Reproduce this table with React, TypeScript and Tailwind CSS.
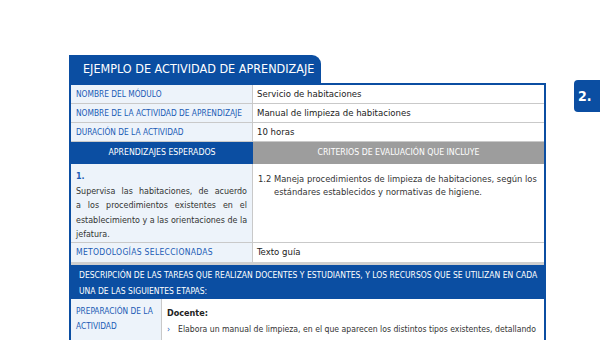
import React from "react";

const blue = "bg-[#0b4ea2]";

type Row = { label: string; value: string };

const rows: Row[] = [
  { label: "NOMBRE DEL MÓDULO", value: "Servicio de habitaciones" },
  { label: "NOMBRE DE LA ACTIVIDAD DE APRENDIZAJE", value: "Manual de limpieza de habitaciones" },
  { label: "DURACIÓN DE LA ACTIVIDAD", value: "10 horas" },
];

const aprendizaje = [
  "Supervisa las habitaciones, de acuerdo",
  "a los procedimientos existentes en el",
  "establecimiento y a las orientaciones de la",
];

// each line is spread to the full width, as in the printed document
const Line = ({ text }: { text: string }) => (
  <div className="whitespace-nowrap text-justify [text-align-last:justify]">{text}</div>
);

export default function App() {
  return (
    <div
      className="w-[600px] h-[340px] overflow-hidden bg-white relative text-[#333]"
      style={{ fontFamily: '"DejaVu Sans Condensed", "DejaVu Sans", sans-serif' }}
    >
      <div className="absolute right-0 top-[80px] w-[26px] h-[32px] rounded-l-[4px] bg-[#0b4ea2] text-white font-bold text-[14px] flex items-center pl-[4px]">
        2.
      </div>

      <div className="pt-[55px] pl-[69px] w-[546px]">
        <div className={`${blue} w-[252px] h-[28px] rounded-tr-[9px] text-white text-[12.5px] flex items-center pl-[14px] whitespace-nowrap`}>
          EJEMPLO DE ACTIVIDAD DE APRENDIZAJE
        </div>

        <div className="border-x-2 border-[#0b4ea2] border-t-2">
          {rows.map((r) => (
            <div key={r.label} className="flex h-[19px] border-b border-[#c9c9c9]">
              <div className="w-[182px] bg-[#edf3fa] border-r border-[#c9c9c9] text-[#1a5bb5] text-[8.3px] flex items-center pl-[5px] whitespace-nowrap">
                {r.label}
              </div>
              <div className="flex-1 flex items-center pl-[4px] text-[#222] text-[9.5px]">{r.value}</div>
            </div>
          ))}

          <div className="flex h-[22px] text-[8.7px] text-white">
            <div className={`w-[182px] ${blue} flex items-center justify-center`}>APRENDIZAJES ESPERADOS</div>
            <div className="flex-1 bg-[#9d9d9d] flex items-center justify-center">
              CRITERIOS DE EVALUACIÓN QUE INCLUYE
            </div>
          </div>

          <div className="flex h-[79px] border-b border-[#c9c9c9] text-[9.3px] leading-[14.5px]">
            <div className="w-[182px] bg-[#edf3fa] border-r border-[#c9c9c9] px-[5px] pt-[5px] text-[8.9px]">
              <div className="font-bold text-[#1a5bb5]">1.</div>
              {aprendizaje.map((t) => (
                <Line key={t} text={t} />
              ))}
              <div>jefatura.</div>
            </div>
            <div className="flex-1 pl-[5px] pr-[8px] pt-[8px] flex leading-[13px]">
              <span className="w-[16px] shrink-0">1.2</span>
              <div className="flex-1">
                <Line text="Maneja procedimientos de limpieza de habitaciones, según los" />
                <div>estándares establecidos y normativas de higiene.</div>
              </div>
            </div>
          </div>

          <div className="flex h-[22px] border-b-[3px] border-[#cfcfcf]">
            <div className="w-[182px] bg-[#edf3fa] border-r border-[#c9c9c9] text-[#1a5bb5] text-[8.5px] flex items-center pl-[5px] tracking-[0.3px]">
              METODOLOGÍAS SELECCIONADAS
            </div>
            <div className="flex-1 flex items-center pl-[4px] text-[#222] text-[9.5px]">Texto guía</div>
          </div>

          <div className={`${blue} h-[34px] text-white text-[8.5px] leading-[16px] px-[8px] pt-[2px]`}>
            <div className="whitespace-nowrap">
              DESCRIPCIÓN DE LAS TAREAS QUE REALIZAN DOCENTES Y ESTUDIANTES, Y LOS RECURSOS QUE SE UTILIZAN EN CADA
            </div>
            <div>UNA DE LAS SIGUIENTES ETAPAS:</div>
          </div>

          <div className="flex h-[60px] leading-[15px]">
            <div className="w-[91px] bg-[#edf3fa] border-r border-[#c9c9c9] text-[#1a5bb5] text-[8.3px] pl-[5px] pt-[5px] whitespace-nowrap">
              PREPARACIÓN DE LA
              <br />
              ACTIVIDAD
            </div>
            <div className="flex-1 pl-[5px] pr-[8px] pt-[7px] text-[8.6px]">
              <div className="font-bold text-[#222] text-[9px]">Docente:</div>
              <div className="flex leading-[16px]">
                <span className="w-[11px] shrink-0 text-[#1a5bb5]">›</span>
                <div className="flex-1">
                  <Line text="Elabora un manual de limpieza, en el que aparecen los distintos tipos existentes, detallando" />
                  <div>sus características e indicaciones de uso.</div>
                </div>
              </div>
            </div>
          </div>
        </div>
      </div>
    </div>
  );
}
